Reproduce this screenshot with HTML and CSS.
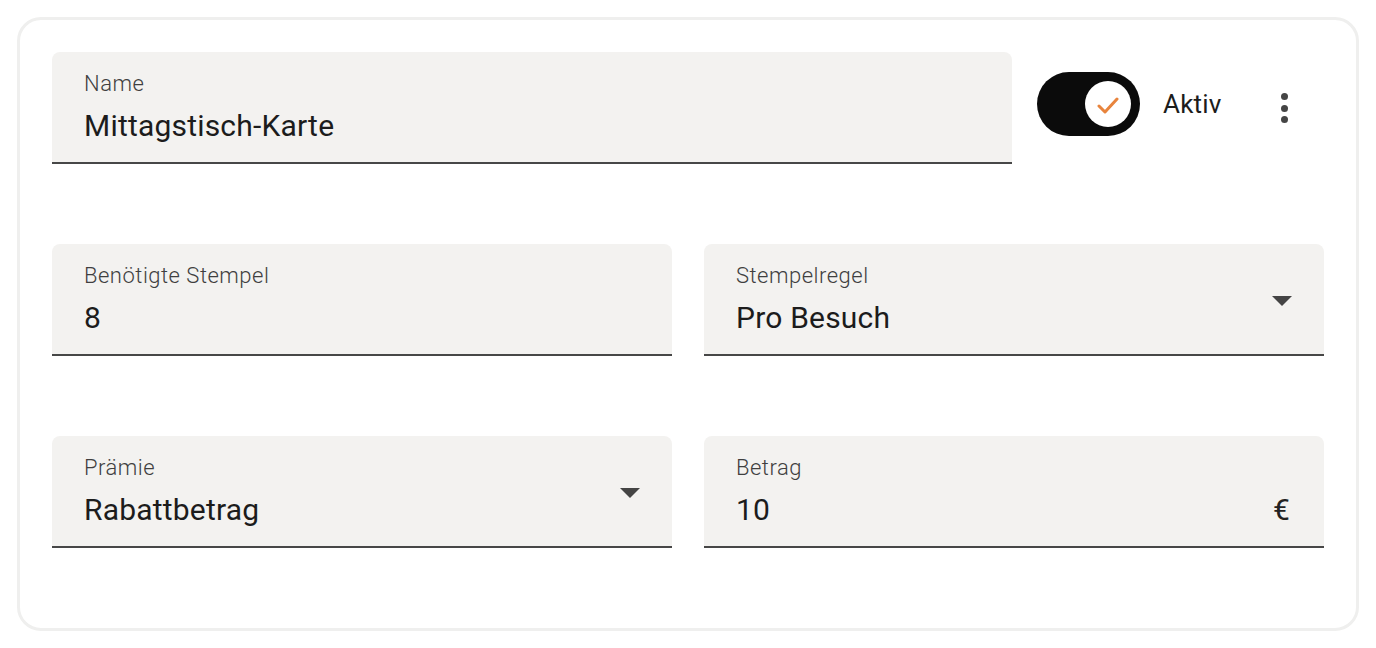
FILE: index.html
```html
<!DOCTYPE html>
<html lang="de">
<head>
<meta charset="utf-8">
<title>Stempelkarte</title>
<link rel="stylesheet" href="styles.css">
</head>
<body>
<div class="card">
  <div class="row row-top">
    <div class="field field-name">
      <div class="label">Name</div>
      <div class="value">Mittagstisch-Karte</div>
    </div>
    <div class="status">
      <div class="toggle">
        <div class="knob">
          <svg width="24" height="18" viewBox="0 0 24 18"><polyline points="3,10 9,16 21,3" fill="none" stroke="#e8843d" stroke-width="3" stroke-linecap="round" stroke-linejoin="round"/></svg>
        </div>
      </div>
      <span class="status-label">Aktiv</span>
    </div>
    <button class="kebab" type="button" aria-label="Mehr">
      <span class="dot"></span><span class="dot"></span><span class="dot"></span>
    </button>
  </div>
  <div class="row">
    <div class="field">
      <div class="label">Benötigte Stempel</div>
      <div class="value">8</div>
    </div>
    <div class="field select">
      <div class="label">Stempelregel</div>
      <div class="value">Pro Besuch</div>
      <span class="arrow"></span>
    </div>
  </div>
  <div class="row">
    <div class="field select">
      <div class="label">Prämie</div>
      <div class="value">Rabattbetrag</div>
      <span class="arrow"></span>
    </div>
    <div class="field">
      <div class="label">Betrag</div>
      <div class="value value-adorn"><span>10</span><span class="euro">€</span></div>
    </div>
  </div>
</div>
</body>
</html>
```

FILE: styles.css
```css
* { box-sizing: border-box; }
html, body { margin: 0; padding: 0; background: #ffffff; }
body {
  font-family: Roboto, "Liberation Sans", sans-serif;
  color: #1c1c1c;
}
.card {
  margin: 17px 0 0 17px;
  width: 1342px;
  height: 614px;
  border: 3px solid #efefee;
  border-radius: 24px;
  padding: 32px 32px 80px 32px;
  display: flex;
  flex-direction: column;
  gap: 80px;
  background: #ffffff;
}
.row {
  display: flex;
  gap: 32px;
}
.row-top { gap: 0; align-items: center; }
.field {
  position: relative;
  flex: 1 1 0;
  height: 112px;
  background: #f3f2f0;
  border-radius: 8px 8px 0 0;
  border-bottom: 2px solid #474747;
  padding: 18px 32px 0 32px;
}
.field-name { flex: 0 0 960px; }
.label {
  font-size: 22px;
  font-weight: 300;
  line-height: 28px;
  letter-spacing: 0.5px;
  color: #3f3f3f;
}
.value {
  margin-top: 8px;
  font-size: 30px;
  line-height: 40px;
  letter-spacing: 0.2px;
  color: #1c1c1c;
}
.value-adorn {
  display: flex;
  justify-content: space-between;
  padding-right: 2px;
}
.euro { color: #222; }
.arrow {
  position: absolute;
  right: 32px;
  top: 52px;
  width: 0;
  height: 0;
  border-left: 10px solid transparent;
  border-right: 10px solid transparent;
  border-top: 10px solid #444;
}
.status {
  align-self: flex-start;
  margin-top: 20px;
  margin-left: 25px;
  display: flex;
  align-items: center;
  gap: 23px;
}
.toggle {
  width: 103px;
  height: 64px;
  border-radius: 32px;
  background: #0b0b0b;
  display: flex;
  align-items: center;
  justify-content: flex-end;
  padding-right: 9px;
}
.knob {
  width: 46px;
  height: 46px;
  border-radius: 50%;
  background: #ffffff;
  display: flex;
  align-items: center;
  justify-content: center;
}
.knob svg { margin-top: 2px; }
.status-label {
  font-size: 26px;
  line-height: 32px;
  color: #1c1c1c;
  letter-spacing: 0.2px;
}
.kebab {
  margin-left: 39px;
  width: 48px;
  height: 48px;
  border: 0;
  background: transparent;
  padding: 0;
  display: flex;
  flex-direction: column;
  align-items: center;
  justify-content: center;
  gap: 4.5px;
}
.dot {
  width: 7px;
  height: 7px;
  border-radius: 50%;
  background: #454545;
}
```
